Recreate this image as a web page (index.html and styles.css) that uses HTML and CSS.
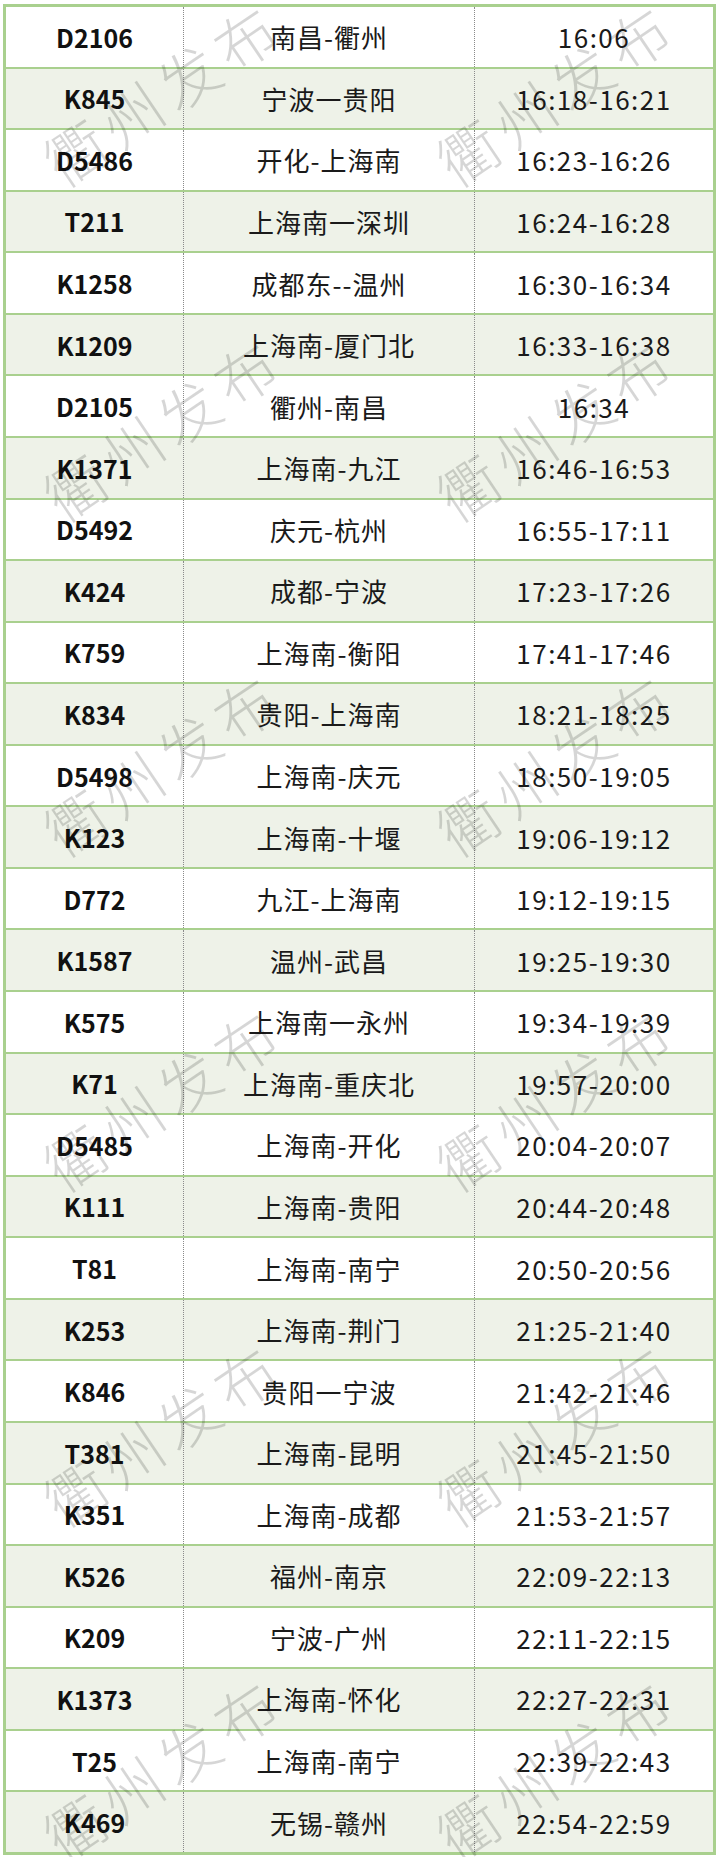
FILE: index.html
```html
<!DOCTYPE html>
<html lang="zh">
<head>
<meta charset="utf-8">
<title>列车时刻</title>
<link rel="stylesheet" href="styles.css">
</head>
<body>
<div class="table">
  <div class="row"><div class="c1">D2106</div><div class="c2">南昌-衢州</div><div class="c3">16:06</div></div>
  <div class="row"><div class="c1">K845</div><div class="c2">宁波一贵阳</div><div class="c3">16:18-16:21</div></div>
  <div class="row"><div class="c1">D5486</div><div class="c2">开化-上海南</div><div class="c3">16:23-16:26</div></div>
  <div class="row"><div class="c1">T211</div><div class="c2">上海南一深圳</div><div class="c3">16:24-16:28</div></div>
  <div class="row"><div class="c1">K1258</div><div class="c2">成都东--温州</div><div class="c3">16:30-16:34</div></div>
  <div class="row"><div class="c1">K1209</div><div class="c2">上海南-厦门北</div><div class="c3">16:33-16:38</div></div>
  <div class="row"><div class="c1">D2105</div><div class="c2">衢州-南昌</div><div class="c3">16:34</div></div>
  <div class="row"><div class="c1">K1371</div><div class="c2">上海南-九江</div><div class="c3">16:46-16:53</div></div>
  <div class="row"><div class="c1">D5492</div><div class="c2">庆元-杭州</div><div class="c3">16:55-17:11</div></div>
  <div class="row"><div class="c1">K424</div><div class="c2">成都-宁波</div><div class="c3">17:23-17:26</div></div>
  <div class="row"><div class="c1">K759</div><div class="c2">上海南-衡阳</div><div class="c3">17:41-17:46</div></div>
  <div class="row"><div class="c1">K834</div><div class="c2">贵阳-上海南</div><div class="c3">18:21-18:25</div></div>
  <div class="row"><div class="c1">D5498</div><div class="c2">上海南-庆元</div><div class="c3">18:50-19:05</div></div>
  <div class="row"><div class="c1">K123</div><div class="c2">上海南-十堰</div><div class="c3">19:06-19:12</div></div>
  <div class="row"><div class="c1">D772</div><div class="c2">九江-上海南</div><div class="c3">19:12-19:15</div></div>
  <div class="row"><div class="c1">K1587</div><div class="c2">温州-武昌</div><div class="c3">19:25-19:30</div></div>
  <div class="row"><div class="c1">K575</div><div class="c2">上海南一永州</div><div class="c3">19:34-19:39</div></div>
  <div class="row"><div class="c1">K71</div><div class="c2">上海南-重庆北</div><div class="c3">19:57-20:00</div></div>
  <div class="row"><div class="c1">D5485</div><div class="c2">上海南-开化</div><div class="c3">20:04-20:07</div></div>
  <div class="row"><div class="c1">K111</div><div class="c2">上海南-贵阳</div><div class="c3">20:44-20:48</div></div>
  <div class="row"><div class="c1">T81</div><div class="c2">上海南-南宁</div><div class="c3">20:50-20:56</div></div>
  <div class="row"><div class="c1">K253</div><div class="c2">上海南-荆门</div><div class="c3">21:25-21:40</div></div>
  <div class="row"><div class="c1">K846</div><div class="c2">贵阳一宁波</div><div class="c3">21:42-21:46</div></div>
  <div class="row"><div class="c1">T381</div><div class="c2">上海南-昆明</div><div class="c3">21:45-21:50</div></div>
  <div class="row"><div class="c1">K351</div><div class="c2">上海南-成都</div><div class="c3">21:53-21:57</div></div>
  <div class="row"><div class="c1">K526</div><div class="c2">福州-南京</div><div class="c3">22:09-22:13</div></div>
  <div class="row"><div class="c1">K209</div><div class="c2">宁波-广州</div><div class="c3">22:11-22:15</div></div>
  <div class="row"><div class="c1">K1373</div><div class="c2">上海南-怀化</div><div class="c3">22:27-22:31</div></div>
  <div class="row"><div class="c1">T25</div><div class="c2">上海南-南宁</div><div class="c3">22:39-22:43</div></div>
  <div class="row"><div class="c1">K469</div><div class="c2">无锡-赣州</div><div class="c3">22:54-22:59</div></div>
</div>
<div class="wm-layer" aria-hidden="true">
  <span class="wm">衢州发布</span><span class="wm">衢州发布</span>
  <span class="wm">衢州发布</span><span class="wm">衢州发布</span>
  <span class="wm">衢州发布</span><span class="wm">衢州发布</span>
  <span class="wm">衢州发布</span><span class="wm">衢州发布</span>
  <span class="wm">衢州发布</span><span class="wm">衢州发布</span>
  <span class="wm">衢州发布</span><span class="wm">衢州发布</span>
</div>
</body>
</html>
```

FILE: styles.css
```css
html, body {
  margin: 0;
  padding: 0;
}
body {
  width: 720px;
  height: 1857px;
  overflow: hidden;
  position: relative;
  background: #ffffff;
  font-family: "Noto Sans CJK SC", "Noto Sans", sans-serif;
  color: #1a1a1a;
}
.table {
  margin: 4px 0 0 3px;
  width: 713px;
  box-sizing: border-box;
  border: 3px solid #a9d08e;
}
.row {
  display: flex;
  height: 61.57px;
  box-sizing: border-box;
  border-top: 2px solid #a9d08e;
}
.row:first-child {
  border-top: 0;
  height: 59.57px;
}
.row:nth-child(even) {
  background: #eef2e8;
}
.c1, .c2, .c3 {
  display: flex;
  align-items: center;
  justify-content: center;
  white-space: nowrap;
}
.c1 {
  width: 177px;
  font-weight: 700;
  font-size: 25px;
  color: #111;
}
.c2 {
  width: 291px;
  box-sizing: border-box;
  border-left: 1px dotted #8a8a8a;
  font-size: 26px;
  letter-spacing: 1px;
}
.c3 {
  flex: 1;
  border-left: 1px dotted #8a8a8a;
  font-size: 26px;
  letter-spacing: 1.5px;
}
.wm-layer {
  position: absolute;
  top: -74px;
  left: -38px;
  display: grid;
  grid-template-columns: repeat(2, 393px);
  grid-auto-rows: 335px;
  place-items: center;
  pointer-events: none;
}
.wm {
  transform: rotate(-34deg);
  font-size: 60px;
  line-height: 1;
  font-weight: 300;
  letter-spacing: 8px;
  padding-left: 8px;
  color: rgba(0, 0, 0, 0.16);
  white-space: nowrap;
}
```
